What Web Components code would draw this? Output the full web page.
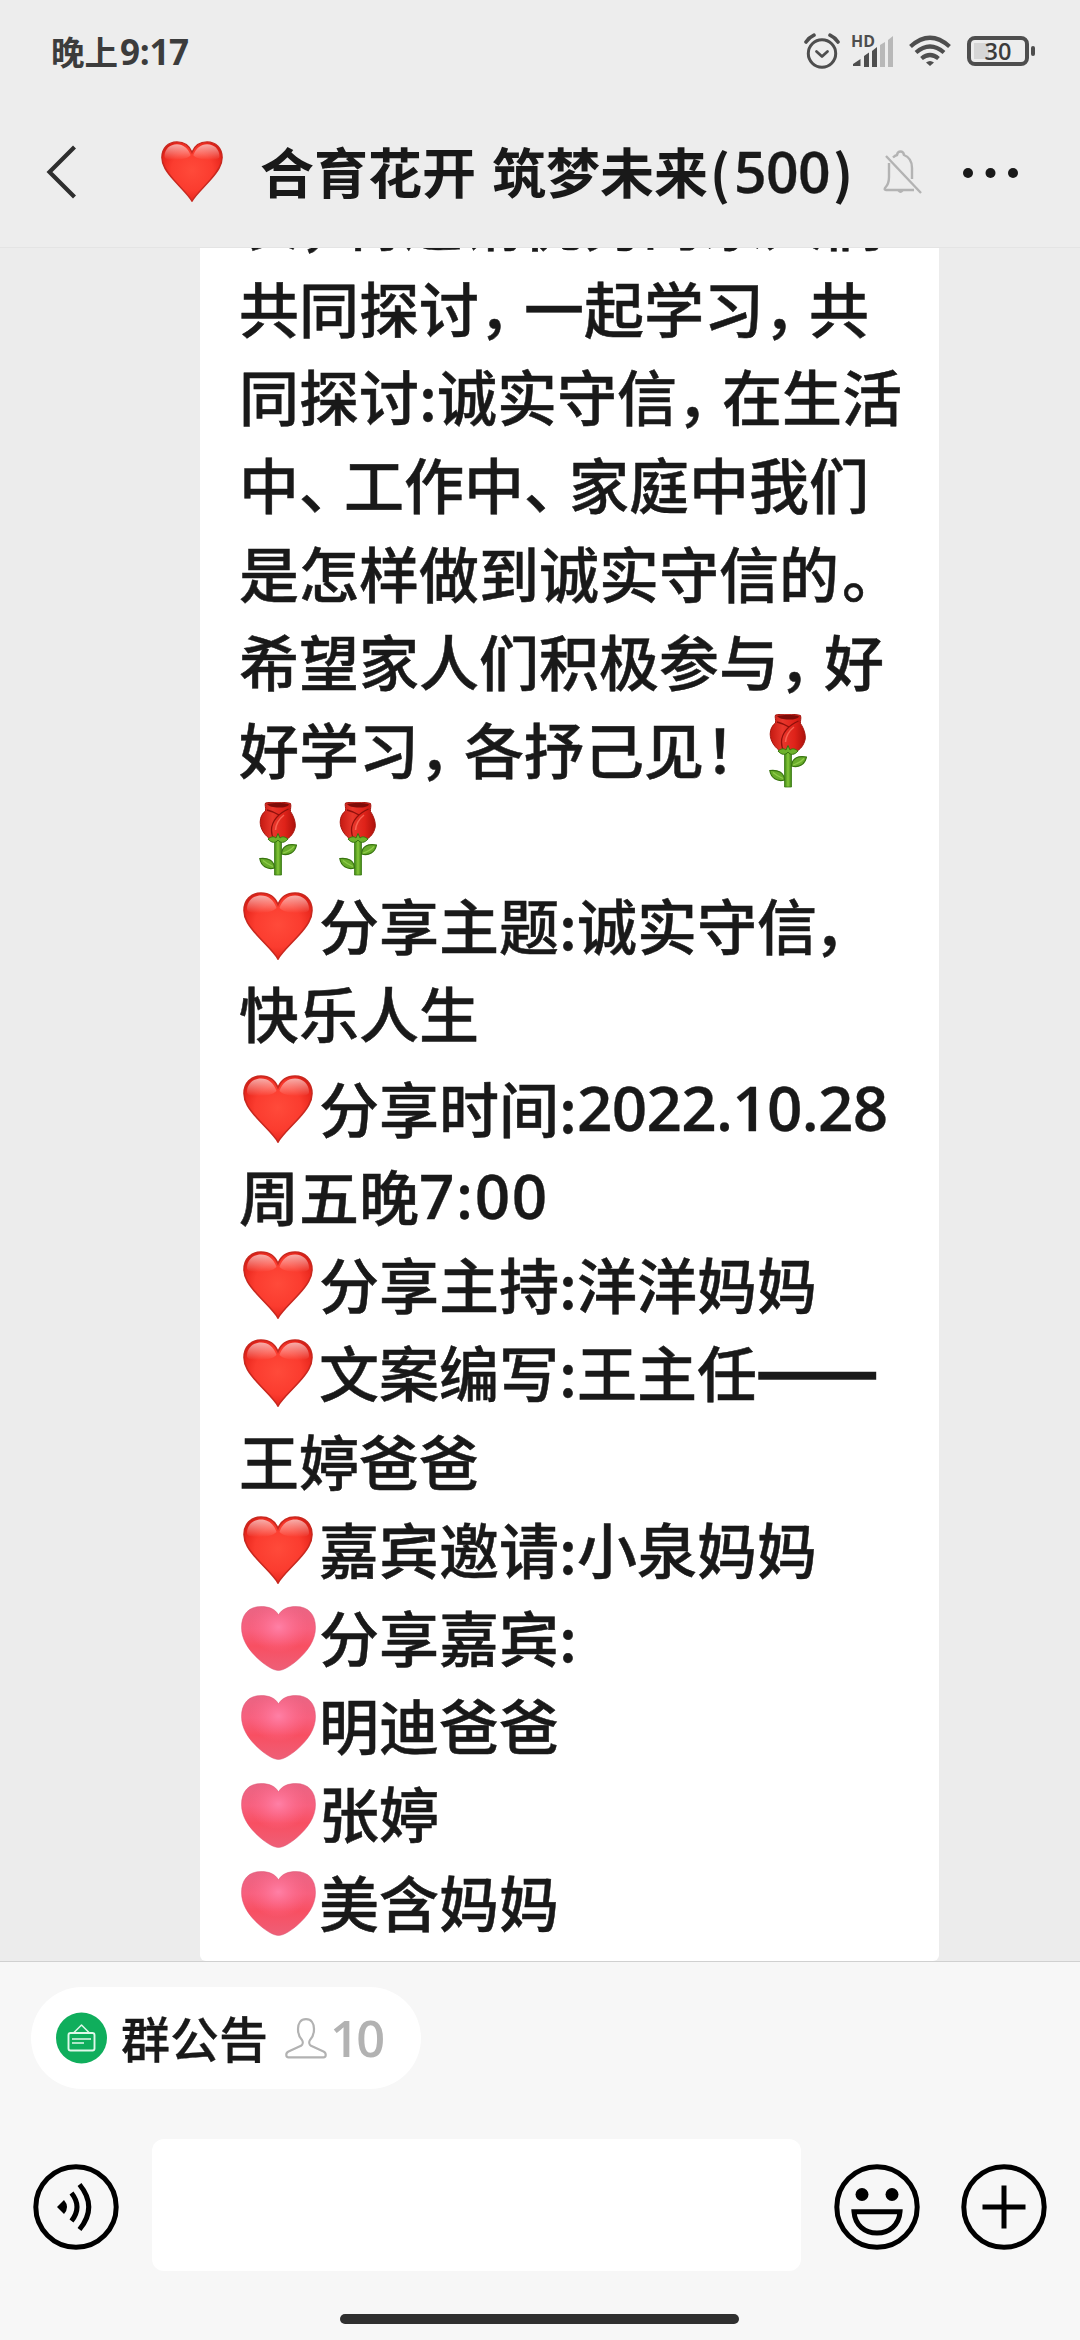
<!DOCTYPE html>
<html lang="zh-CN">
<head>
<meta charset="utf-8">
<title>合育花开 筑梦未来</title>
<style>
html,body{margin:0;padding:0;width:1080px;height:2340px;overflow:hidden;background:#ededed}
body{font-family:"Noto Sans CJK SC",sans-serif;color:#191919}
</style>
</head>
<body>
<chat-app></chat-app>
<script>
const define=(name,html,init)=>{
  const t=document.createElement('template');
  t.innerHTML=html;
  customElements.define(name,class extends HTMLElement{
    constructor(){super();this.attachShadow({mode:'open'}).append(t.content.cloneNode(true));}
    connectedCallback(){if(init)init(this,this.shadowRoot);}
  });
};

/* text run with a fixed advance */
define('text-run',`<style>
:host{display:block;flex:none;white-space:pre;overflow:visible}
:host([num]){font-family:"Open Sans","Noto Sans",sans-serif;font-weight:600;-webkit-text-stroke:.3px #191919}
:host([dash]){-webkit-text-stroke:3.500px #191919;transform:translateY(-4px) scaleX(1.19);transform-origin:left}
</style><slot></slot>`,(el)=>{
  if(el.hasAttribute('w'))el.style.width=el.getAttribute('w')+'px';
  if(el.hasAttribute('size'))el.style.fontSize=el.getAttribute('size')+'px';
  if(el.hasAttribute('ls'))el.style.letterSpacing=el.getAttribute('ls')+'px';
});

define('red-heart',`<style>
:host{display:flex;flex:none;width:80px;justify-content:center;align-items:center}
svg{display:block;width:var(--heart-w,70px);height:var(--heart-h,68px);margin:var(--heart-top,-2px) 0 0 -2px}
</style>
<svg viewBox="0 0 70 68" preserveAspectRatio="none">
<defs>
<radialGradient id="g" cx=".5" cy=".48" r=".62"><stop offset="0" stop-color="#ff4a3a"/><stop offset=".55" stop-color="#fb3c2f"/><stop offset=".85" stop-color="#e8261c"/><stop offset="1" stop-color="#c9150f"/></radialGradient>
<linearGradient id="h" x1="0" y1="0" x2="0" y2="1"><stop offset="0" stop-color="#fff" stop-opacity=".62"/><stop offset="1" stop-color="#fff" stop-opacity="0"/></linearGradient>
</defs>
<path d="M35 67C31 60 23 53 14 43C6 34 1 27 1 18.500C1 8 8 1 18 1C26 1 32 5 35 12.500C38 5 44 1 52 1C62 1 69 8 69 18.500C69 27 64 34 56 43C47 53 39 60 35 67Z" fill="url(#g)" stroke="#c8281f" stroke-width="1.600"/>
<path d="M18 3.500C25 3.500 31 8 33.500 16C30 20 22 21 14 21C8 21 4 20 4 17C4 9 10 3.500 18 3.500ZM52 3.500C45 3.500 39 8 36.500 16C40 20 48 21 56 21C62 21 66 20 66 17C66 9 60 3.500 52 3.500Z" fill="url(#h)"/>
</svg>`);

define('pink-heart',`<style>
:host{display:flex;flex:none;width:80px;justify-content:center;align-items:center}
svg{display:block;width:75px;height:65px;margin-left:-2px}
</style>
<svg viewBox="0 0 75 65">
<defs>
<linearGradient id="b" x1="0" y1="0" x2="0" y2="1"><stop offset="0" stop-color="#ea6483"/><stop offset=".35" stop-color="#f7607e"/><stop offset=".62" stop-color="#f84f62"/><stop offset="1" stop-color="#ee5f77"/></linearGradient>
<radialGradient id="c" cx=".5" cy=".32" r=".4"><stop offset="0" stop-color="#ff80a6"/><stop offset="1" stop-color="#ff6a8c" stop-opacity="0"/></radialGradient>
</defs>
<path d="M37.500 64.500C33 64.500 26 60.500 19 54.500C8 45 .5 34 .5 21.500C.5 8 8 .5 20 .5C28 .5 34.500 3 37.500 9C40.500 3 47 .5 55 .5C67 .5 74.500 8 74.500 21.500C74.500 34 67 45 56 54.500C49 60.500 42 64.500 37.500 64.500Z" fill="url(#b)"/>
<path d="M37.500 64.500C33 64.500 26 60.500 19 54.500C8 45 .5 34 .5 21.500C.5 8 8 .5 20 .5C28 .5 34.500 3 37.500 9C40.500 3 47 .5 55 .5C67 .5 74.500 8 74.500 21.500C74.500 34 67 45 56 54.500C49 60.500 42 64.500 37.500 64.500Z" fill="url(#c)" stroke="#d94f6e" stroke-opacity=".45" stroke-width="1"/>
</svg>`);

define('red-rose',`<style>
:host{display:flex;flex:none;width:80px;justify-content:center;align-items:center}
svg{display:block;width:38px;height:74px;margin-left:-2px}
</style>
<svg viewBox="0 0 38 74">
<defs>
<linearGradient id="p" x1="0" y1="0" x2="1" y2="0"><stop offset="0" stop-color="#c51a12"/><stop offset=".35" stop-color="#e8372c"/><stop offset=".7" stop-color="#df2219"/><stop offset="1" stop-color="#ad120c"/></linearGradient>
<linearGradient id="s" x1="0" y1="0" x2="1" y2="0"><stop offset="0" stop-color="#3d8413"/><stop offset=".5" stop-color="#86c83a"/><stop offset="1" stop-color="#3d8413"/></linearGradient>
</defs>
<path d="M15.500 37H22.500V73H15.500Z" fill="url(#s)" stroke="#3b7a14" stroke-width=".8"/>
<path d="M22.500 52C23 44 29 41.500 37.500 43C36 50.500 30 54 22.500 52ZM15.500 66C15 58.500 9 55.500 .8 56.500C2 64 8 68 15.500 66Z" fill="#69ad2b" stroke="#37740f" stroke-width="1.200"/>
<path d="M24 51Q31 49 35 44.500M14 64.500Q8 62 4 58.500" fill="none" stroke="#8fcc4a" stroke-width="1.200"/>
<path d="M6.500 1C12 -.2 26 -.2 31.500 1.500C32.500 4.500 31 7 31.500 9.500C34.500 14 36.800 20 36.200 25C35 31 31.500 35.500 27 37.500H12C6 34 1.200 27 1.200 20C1.200 15 3.500 11 6.500 9C7.200 6 5.500 3 6.500 1Z" fill="url(#p)" stroke="#a5150e" stroke-width="1"/>
<path d="M8 2C14 .6 25 .6 30 2.200C29.500 6.500 11 7 8 2Z" fill="#7e0c08"/>
<path d="M29.500 7C20 11 12.500 19 12.500 28C12.500 32 13.500 35 15 37M8 8C12 9 17 11 20 13" fill="none" stroke="#8f100b" stroke-width="1.300"/>
<path d="M25 13C20 17 17 22 16.500 28" fill="none" stroke="#ff7a68" stroke-width="1.500" opacity=".7"/>
<path d="M9 37C13 34 15 34.500 17 36L19 31.500L21 36C23 34.500 25 34 29 37C26 41 21 41.500 19 38C17 41.500 12 41 9 37Z" fill="#6db22c" stroke="#37740f" stroke-width="1"/>
</svg>`);

define('msg-line',`<style>
:host{display:flex;flex:none;height:88.200px;align-items:center;font-size:60px;line-height:88px;font-weight:500;--shift:-6px;-webkit-text-stroke:.5px #191919}
:host([gap]){margin-top:6.200px}
::slotted(text-run){margin-top:var(--shift)}
</style><slot></slot>`);

define('status-bar',`<style>
:host{display:flex;height:104px;box-sizing:border-box;padding:0 45px 0 51px;align-items:center;justify-content:space-between;color:#3c3c3c}
.t{display:flex;align-items:baseline;font-weight:700;font-size:33.500px;line-height:50px;height:50px;margin-top:-3px}
.n{font-family:"Open Sans",sans-serif;font-size:35px;margin-left:2px;letter-spacing:-.3px}
svg{display:block;flex:none}
.s{display:flex;align-items:center;margin-top:-2px}
.b{box-sizing:border-box;width:62px;height:30px;border:4px solid #4e4e4e;border-radius:8px;padding:3px;display:flex;background:linear-gradient(#d6d6d6,#d6d6d6) 3px 3px/15px 16px no-repeat;align-items:center;justify-content:center;font:600 23.500px/16px "Open Sans",sans-serif;color:#3c3c3c}
.c{width:4px;height:10px;border-radius:2px;background:#4e4e4e;margin-left:2px}
.g{overflow:visible}
</style>
<div class="t"><span>晚上</span><span class="n">9:17</span></div>
<div class="s">
<svg width="36" height="36" viewBox="0 0 36 36" fill="none" stroke="#4e4e4e" stroke-width="3" style="margin-right:11px"><circle cx="18" cy="20.500" r="13.700"/><path d="M12.500 18.500L18 23.500L23.500 18.500" stroke-linecap="round" stroke-linejoin="round" stroke-width="2.800"/><path d="M2 9Q5 4.500 10 2.200M34 9Q31 4.500 26 2.200" stroke-linecap="round" stroke-width="3.600"/></svg>
<svg class="g" width="43" height="34" viewBox="0 0 43 34" style="margin-right:15px"><text x="0" y="12.800" font-family="Open Sans,sans-serif" font-weight="700" font-size="16" textLength="24" lengthAdjust="spacingAndGlyphs" fill="#4e4e4e">HD</text><g fill="#4e4e4e"><path d="M2 32V30L9.500 25V32Z M13 33V22L18 18.500V33Z M21 33V17L26 13V33Z"/></g><path d="M29 33V11L34 8V33ZM37 33V6L42 2V33Z" fill="#b8b8b8"/></svg>
<svg width="42" height="32" viewBox="0 0 42 32" fill="none" stroke="#4e4e4e" stroke-width="4.200" style="margin-right:16px"><path d="M1.500 11.500Q21 -6 40.500 11.500M7 17.500Q21 5.500 35 17.500M12.500 23.500Q21 16.500 29.500 23.500"/><path d="M17 27.500Q21 24.500 25 27.500L21 31Z" fill="#4e4e4e" stroke="none"/></svg>
<div class="b">30</div><div class="c"></div>
</div>`);

define('title-bar',`<style>
:host{display:flex;height:144px;box-sizing:border-box;border-bottom:1px solid #e4e4e4;padding:0 62px 8px 46px;align-items:center;font-weight:700;font-size:54px;line-height:80px}
svg{display:block;flex:none}
red-heart{--heart-w:62px;--heart-h:61px;--heart-top:0px;width:62px;margin-left:86px;margin-right:36px}
text-run{margin-top:-2px}
.sp{flex:1}
</style>
<svg width="30" height="54" viewBox="0 0 30 54" fill="none" stroke="#2e2e2e" stroke-width="4.200"><path d="M28.500 2L3.500 27L28.500 52"/></svg>
<red-heart></red-heart>
<text-run w="232">合育花开 </text-run><text-run w="218">筑梦未来</text-run><text-run w="24" size="53">(</text-run><text-run num w="99" size="57" ls="-.6">500</text-run><text-run size="53">)</text-run>
<div class="sp"></div>
<svg width="40" height="44" viewBox="0 0 40 44" fill="none" stroke="#b3b3b3" stroke-width="2.400" style="margin-right:40px"><path d="M6 13V27Q6 34 2 38Q1 40 3 40H31M10 7.500Q12 5.500 14 5Q14.500 1.500 17.500 1.500Q20.500 1.500 21 5Q29 8 29 18V29"/><path d="M3 6L38 43"/><path d="M14.500 41Q17.500 45 20.500 41Z" fill="#b3b3b3" stroke="none"/></svg>
<svg width="55" height="12" viewBox="0 0 55 12" fill="#191919" style="margin-top:3px"><circle cx="5" cy="6" r="5"/><circle cx="27.500" cy="6" r="5"/><circle cx="50" cy="6" r="5"/></svg>`);

define('announcement-card',`<style>
:host{display:flex;flex-direction:column;box-sizing:border-box;width:739px;height:1713px;margin-left:200px;padding-left:39px;background:#fff;border-radius:0 0 6px 6px;overflow:hidden}
.first{margin-top:-70.300px}
.first text-run{margin-top:-4px}
</style>
<msg-line class="first"><text-run w="60">长</text-run><text-run w="44">，</text-run><text-run>特邀请优秀的家人们</text-run></msg-line>
<msg-line><text-run w="240">共同探讨</text-run><text-run w="45">，</text-run><text-run w="240">一起学习</text-run><text-run w="45">，</text-run><text-run>共</text-run></msg-line>
<msg-line><text-run w="180">同探讨</text-run><text-run w="18">:</text-run><text-run w="240">诚实守信</text-run><text-run w="45">，</text-run><text-run>在生活</text-run></msg-line>
<msg-line><text-run w="60">中</text-run><text-run w="45">、</text-run><text-run w="180">工作中</text-run><text-run w="45">、</text-run><text-run>家庭中我们</text-run></msg-line>
<msg-line><text-run w="603">是怎样做到诚实守信的</text-run><text-run>。</text-run></msg-line>
<msg-line><text-run w="540">希望家人们积极参与</text-run><text-run w="45">，</text-run><text-run>好</text-run></msg-line>
<msg-line><text-run w="180">好学习</text-run><text-run w="45">，</text-run><text-run w="241">各抒己见</text-run><text-run w="44">！</text-run><red-rose></red-rose></msg-line>
<msg-line><red-rose></red-rose><red-rose></red-rose></msg-line>
<msg-line><red-heart></red-heart><text-run w="240">分享主题</text-run><text-run w="18">:</text-run><text-run w="237">诚实守信</text-run><text-run>，</text-run></msg-line>
<msg-line><text-run>快乐人生</text-run></msg-line>
<msg-line gap><red-heart></red-heart><text-run w="240">分享时间</text-run><text-run w="18">:</text-run><text-run num size="62" ls="-.7">2022.10.28</text-run></msg-line>
<msg-line><text-run w="180">周五晚</text-run><text-run num size="62" ls="1.6">7:00</text-run></msg-line>
<msg-line><red-heart></red-heart><text-run w="240">分享主持</text-run><text-run w="18">:</text-run><text-run>洋洋妈妈</text-run></msg-line>
<msg-line><red-heart></red-heart><text-run w="240">文案编写</text-run><text-run w="18">:</text-run><text-run w="180">王主任</text-run><text-run dash>——</text-run></msg-line>
<msg-line><text-run>王婷爸爸</text-run></msg-line>
<msg-line><red-heart></red-heart><text-run w="240">嘉宾邀请</text-run><text-run w="18">:</text-run><text-run>小泉妈妈</text-run></msg-line>
<msg-line><pink-heart></pink-heart><text-run w="240">分享嘉宾</text-run><text-run>:</text-run></msg-line>
<msg-line><pink-heart></pink-heart><text-run>明迪爸爸</text-run></msg-line>
<msg-line><pink-heart></pink-heart><text-run>张婷</text-run></msg-line>
<msg-line><pink-heart></pink-heart><text-run>美含妈妈</text-run></msg-line>`);

define('notice-pill',`<style>
:host{display:flex;box-sizing:border-box;width:390px;height:102px;border-radius:51px;background:#fff;align-items:center;padding-left:25px}
svg{display:block;flex:none}
.t{font-size:49px;line-height:72px;font-weight:500;margin:-3px 17px 0 14px;width:147px;white-space:nowrap;-webkit-text-stroke:.3px #191919}
.n{font:600 50.500px/72px "Open Sans",sans-serif;color:#b2b2b2;margin:0 0 0 3px;letter-spacing:-2.500px}
</style>
<svg width="51" height="52" viewBox="0 0 51 52"><circle cx="25.500" cy="26" r="25.500" fill="#0fae5c"/><g fill="none" stroke="#dff8ea" stroke-width="1.900" stroke-linejoin="round"><rect x="12.500" y="21" width="26" height="17.500" rx="2"/><path d="M17.500 21L25.500 13L33.500 21M16 27H35M16 31H28" stroke-width="1.500"/></g></svg>
<div class="t">群公告</div>
<svg width="42" height="42" viewBox="0 0 42 42" fill="none" stroke="#b2b2b2" stroke-width="2.200" stroke-linejoin="round"><path d="M21 2.200C15.500 2.200 13 6.500 13 12C13 17 14.500 20.500 17 23C18.200 25 18 27.500 16 28.800L3.500 34.500Q1.200 35.500 1.300 38Q1.300 40.300 3.500 40.300H38.500Q40.700 40.300 40.700 38Q40.800 35.500 38.500 34.500L26 28.800C24 27.500 23.800 25 25 23C27.500 20.500 29 17 29 12C29 6.500 26.500 2.200 21 2.200Z"/></svg>
<div class="n">10</div>`);

define('icon-button',`<style>
:host{display:block;flex:none;width:86px;height:86px}
svg{display:none;width:86px;height:86px}
:host([kind=voice]) .voice,:host([kind=smile]) .smile,:host([kind=plus]) .plus{display:block}
</style>
<svg class="voice" viewBox="0 0 86 86" fill="none" stroke="#000" stroke-width="5"><circle cx="43" cy="43" r="40.200"/><path d="M38.500 29Q49.500 43 38.500 57M46.500 20.500Q65 43 46.500 65.500"/><path d="M24 43L31 36Q37 43 31 50Z" fill="#000" stroke="none"/></svg>
<svg class="smile" viewBox="0 0 86 86" fill="none" stroke="#000" stroke-width="5"><circle cx="43" cy="43" r="40.200"/><path d="M20 47.800H66C65 61 55.500 69 43 69S21 61 20 47.800Z"/><circle cx="28" cy="30.500" r="6.500" fill="#000" stroke="none"/><circle cx="58" cy="30.500" r="6.500" fill="#000" stroke="none"/></svg>
<svg class="plus" viewBox="0 0 86 86" fill="none" stroke="#000" stroke-width="5"><circle cx="43" cy="43" r="40.200"/><path d="M43 21.500V64.500M21.500 43H64.500"/></svg>`);

define('input-panel',`<style>
:host{display:flex;flex-direction:column;box-sizing:border-box;height:379px;border-top:1px solid #d0d0d0;background:#f7f7f7;padding:25px 33px 16px 31px;}
.row{display:flex;align-items:center;height:132px;margin-top:50px;padding-left:2px}
.field{width:649px;height:132px;border-radius:12px;background:#fff;margin:0 33px}
.bar{width:399px;height:10px;border-radius:5px;background:#2f2f2f;margin:43px 0 0 309px}
icon-button{margin-top:4px}
icon-button+icon-button{margin-left:41px}
</style>
<notice-pill></notice-pill>
<div class="row"><icon-button kind="voice"></icon-button><div class="field"></div><icon-button kind="smile"></icon-button><icon-button kind="plus"></icon-button></div>
<div class="bar"></div>`);

define('chat-app',`<style>
:host{display:flex;flex-direction:column;width:1080px;height:2340px;background:#ededed;overflow:hidden}
.feed{flex:none;height:1713px;overflow:hidden;background:#ececec}
status-bar,title-bar,input-panel{flex:none}
</style>
<status-bar></status-bar><title-bar></title-bar>
<div class="feed"><announcement-card></announcement-card></div>
<input-panel></input-panel>`);
</script>
</body>
</html>
